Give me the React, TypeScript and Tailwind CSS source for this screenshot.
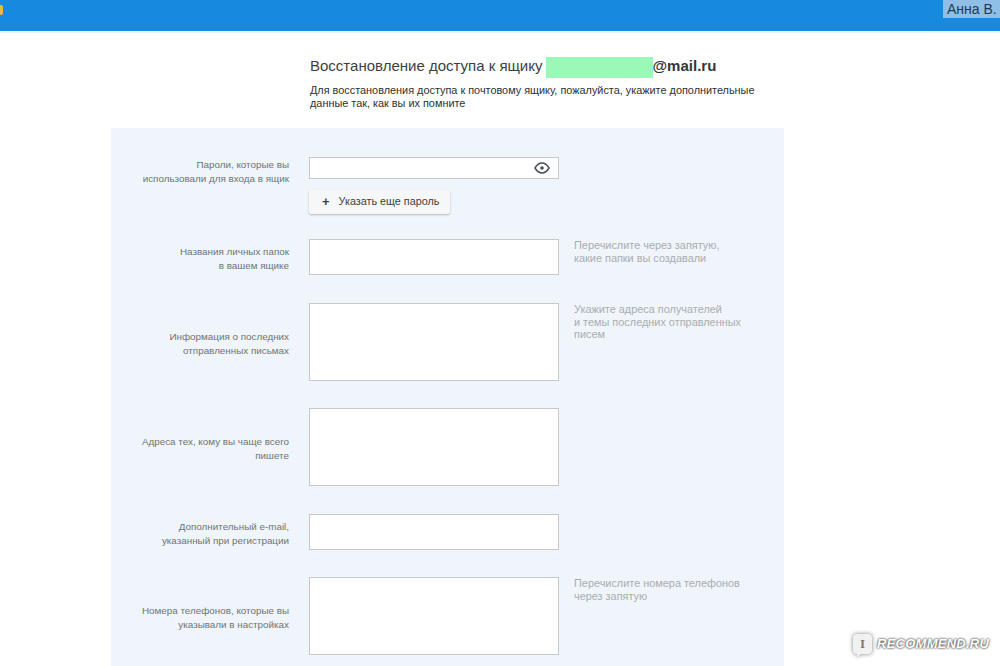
import React from 'react';

const Eye = () => (
    <svg width="16" height="12" viewBox="0 0 16 12" fill="none">
        <path d="M1 6C3 2.6 5.3 1 8 1s5 1.600 7 5c-2 3.400-4.300 5-7 5S3 9.400 1 6z" stroke="#4a4f55" strokeWidth="1.500" />
        <circle cx="8" cy="6" r="1.800" fill="#4a4f55" />
    </svg>
);

type RowProps = {
    label: React.ReactNode;
    hint?: React.ReactNode;
    inputClass: string;
    className: string;
};

function Row({ label, hint, inputClass, className }: RowProps) {
    return (
        <div className={`flex ${className}`}>
            <div className="w-[178px] mr-[20px] pt-[4px] flex items-center justify-end text-right text-[9.850px] leading-[14px] text-[#6f7377]">
                <div>{label}</div>
            </div>
            <div className={`w-[250px] bg-white border border-[#c6c9cb] ${inputClass}`} />
            {hint && <div className="ml-[15px] w-[180px] text-[10.900px] leading-[12.500px] text-[#a9adb1]">{hint}</div>}
        </div>
    );
}

export default function App() {
    return (
        <div className="relative w-[1000px] h-[666px] overflow-hidden bg-white font-['Liberation_Sans',Arial,sans-serif]">
            <div className="h-[31px] bg-[#178ae0] flex justify-between items-start">
                <div className="mt-[5px] w-[3px] h-[10px] rounded-r-[2px] bg-[#f0b840]" />
                <div className="h-[18px] w-[57px] bg-[#8fbfe6] pl-[4px] text-[14px] leading-[18px] text-[#1f3a55] whitespace-nowrap overflow-hidden">Анна В.</div>
            </div>
            <div className="h-[2px] bg-[#eaf4fb]" />

            <div className="ml-[310px] mt-[23px]">
                <div className="flex items-center h-[22px] text-[15px] text-[#3c3f42]">
                    <span className="mb-[2px]">Восстановление доступа к ящику</span>
                    <span className="ml-[4px] w-[107px] h-[21px] bg-[#9bf9b8]" />
                    <span className="mb-[2px] -ml-[1px] font-bold text-[#33363a]">@mail.ru</span>
                </div>
                <p className="mt-[6px] text-[10.880px] leading-[13px] text-[#2e3033] w-[460px]">
                    Для восстановления доступа к почтовому ящику, пожалуйста, укажите дополнительные данные так, как вы их помните
                </p>
            </div>

            <div className="ml-[111px] mt-[18px] w-[673px] h-[600px] bg-[#eff5fa] pt-[29px]">
                <div className="flex">
                    <div className="w-[178px] mr-[20px] pt-[1px] text-right text-[9.850px] leading-[14px] text-[#6f7377]">
                        Пароли, которые вы<br />использовали для входа в ящик
                    </div>
                    <div className="w-[250px]">
                        <div className="h-[22px] bg-white border border-[#c6c9cb] flex items-center justify-end pr-[8px]">
                            <Eye />
                        </div>
                        <div className="mt-[11px] w-[141px] h-[24px] pb-[2px] bg-[#f6f7f8] rounded-[2px] shadow-[0_1px_2px_rgba(0,0,0,0.25)] flex items-center pl-[13px] text-[10.800px] text-[#3c3f42]">
                            <span className="mr-[9px] text-[13px] leading-none font-bold">+</span>
                            Указать еще пароль
                        </div>
                    </div>
                </div>
                <Row
                    className="mt-[25px]"
                    inputClass="h-[36px]"
                    label={<>Названия личных папок<br />в вашем ящике</>}
                    hint={<>Перечислите через запятую,<br />какие папки вы создавали</>}
                />
                <Row
                    className="mt-[28px]"
                    inputClass="h-[78px]"
                    label={<>Информация о последних<br />отправленных письмах</>}
                    hint={<>Укажите адреса получателей<br />и темы последних отправленных<br />писем</>}
                />
                <Row
                    className="mt-[27px]"
                    inputClass="h-[78px]"
                    label={<>Адреса тех, кому вы чаще всего<br />пишете</>}
                />
                <Row
                    className="mt-[28px]"
                    inputClass="h-[36px]"
                    label={<>Дополнительный e-mail,<br />указанный при регистрации</>}
                />
                <Row
                    className="mt-[27px]"
                    inputClass="h-[78px]"
                    label={<>Номера телефонов, которые вы<br />указывали в настройках</>}
                    hint={<>Перечислите номера телефонов<br />через запятую</>}
                />
            </div>

            {/* watermark */}
            <div className="absolute left-[852px] top-[633px] flex items-center">
                <div className="relative w-[21px] h-[25px]">
                    <svg width="21" height="25" viewBox="0 0 21 25" className="drop-shadow-[0_0_2px_rgba(0,0,0,0.5)]">
                        <path d="M5 1h11a4 4 0 0 1 4 4v12a4 4 0 0 1-4 4H9l-4 3v-3a4 4 0 0 1-4-4V5a4 4 0 0 1 4-4z" fill="#f1f1f1" />
                    </svg>
                    <span className="absolute inset-x-0 top-[3px] text-center text-[13px] leading-[15px] font-bold text-[#77797b] font-['Liberation_Serif',serif]">I</span>
                </div>
                <span className="ml-[4px] -mt-[3px] text-[13px] tracking-[0.25px] font-bold italic text-white [text-shadow:0_0_2px_rgba(0,0,0,0.8),0_0_3px_rgba(0,0,0,0.5)]">RECOMMEND.RU</span>
            </div>
        </div>
    );
}
